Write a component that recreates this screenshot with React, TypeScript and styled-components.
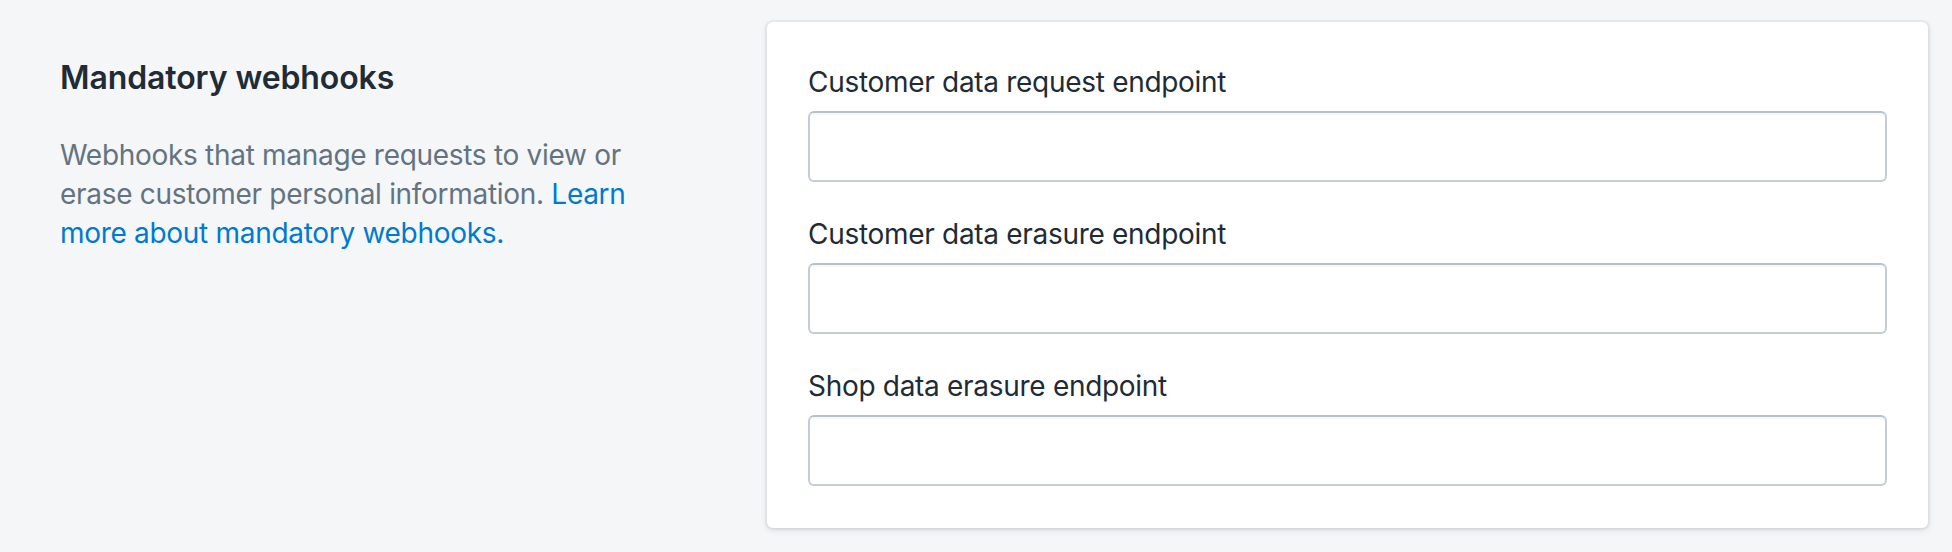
import React from "react";
import styled, { createGlobalStyle } from "styled-components";

const GlobalStyle = createGlobalStyle`
  html, body {
    margin: 0;
    padding: 0;
    background: #f4f6f8;
  }
  body {
    font-family: Inter, "Noto Sans", "Liberation Sans", sans-serif;
    color: #212b36;
  }
`;

const Page = styled.div`
  display: flex;
  align-items: flex-start;
  box-sizing: border-box;
  width: 1952px;
  height: 552px;
  padding: 22px 24px 24px 60px;
`;

const Annotation = styled.div`
  flex: 0 0 auto;
  width: 707px;
  padding-top: 32px;
`;

const Heading = styled.h2`
  margin: 0;
  font-size: 32px;
  line-height: 48px;
  font-weight: 600;
  letter-spacing: -0.1px;
  color: #212b36;
`;

const Description = styled.p`
  margin: 34px 0 0;
  width: 590px;
  font-size: 28px;
  line-height: 39px;
  letter-spacing: -0.3px;
  font-weight: 400;
  color: #637381;
`;

const Link = styled.a`
  color: #007ace;
  text-decoration: none;
  cursor: pointer;
`;

const Card = styled.div`
  flex: 1 1 auto;
  box-sizing: border-box;
  background: #ffffff;
  border-radius: 6px;
  box-shadow: 0 0 0 2px rgba(63, 63, 68, 0.05), 0 2px 6px 0 rgba(63, 63, 68, 0.15);
  padding: 40px 41px 42px;
  display: flex;
  flex-direction: column;
  gap: 32px;
`;

const Field = styled.div`
  display: flex;
  flex-direction: column;
`;

const Label = styled.label`
  display: block;
  font-size: 28px;
  line-height: 40px;
  letter-spacing: -0.3px;
  color: #212b36;
  margin-bottom: 9px;
`;

const Input = styled.input`
  box-sizing: border-box;
  width: 100%;
  height: 71px;
  margin: 0;
  padding: 0 24px;
  border: 2px solid #c4cdd5;
  border-top-color: #b9c1c8;
  border-radius: 6px;
  box-shadow: inset 0 2px 0 0 rgba(99, 115, 129, 0.05);
  background: #ffffff;
  font-family: inherit;
  font-size: 28px;
  color: #212b36;
  outline: none;
`;

const fields = [
  { id: "customer-request", label: "Customer data request endpoint" },
  { id: "customer-erasure", label: "Customer data erasure endpoint" },
  { id: "shop-erasure", label: "Shop data erasure endpoint" },
];

export default function App() {
  return (
    <>
      <GlobalStyle />
      <Page>
        <Annotation>
          <Heading>Mandatory webhooks</Heading>
          <Description>
            Webhooks that manage requests to view or erase customer personal information.{" "}
            <Link>Learn more about mandatory webhooks.</Link>
          </Description>
        </Annotation>
        <Card>
          {fields.map((f) => (
            <Field key={f.id}>
              <Label htmlFor={f.id}>{f.label}</Label>
              <Input id={f.id} type="text" />
            </Field>
          ))}
        </Card>
      </Page>
    </>
  );
}
